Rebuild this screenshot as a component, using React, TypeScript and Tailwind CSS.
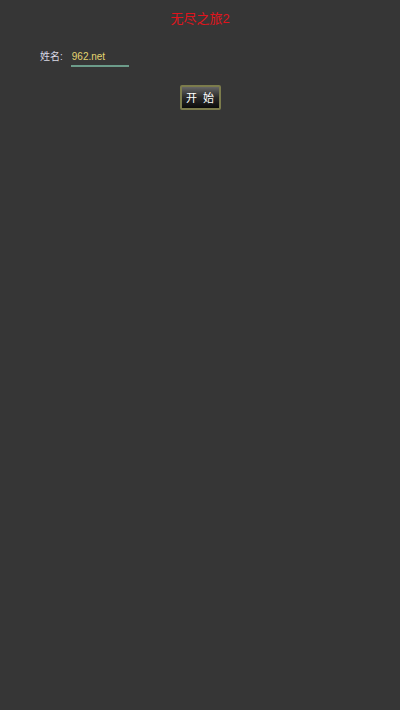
import React from "react";

const App = () => {
  return (
    <div
      className="w-[400px] h-[710px] bg-[#363636] flex flex-col"
      style={{ fontFamily: '"Liberation Sans", "Noto Sans CJK SC", sans-serif' }}
    >
      {/* Title */}
      <div className="pt-[11px] h-[28px] text-center text-[13px] leading-[16px] text-[#e0141c]">
        无尽之旅2
      </div>

      {/* Name row */}
      <div className="flex items-start mt-[23px] pl-[40px] text-[10px] leading-[12px]">
        <span className="text-[#d8d8e4]">姓名:</span>
        <div className="ml-[8px] w-[58px] border-b-2 border-[#6c9c8a] pb-[2px] text-[#e4d470] pl-[1px]">
          962.net
        </div>
      </div>

      {/* Start button */}
      <div className="flex justify-center mt-[18px]">
        <button className="w-[41px] h-[25px] border-2 border-[#7c7c4c] rounded-[2px] bg-gradient-to-b from-[#666666] via-[#2a2a2a] to-[#0c0c0c] text-[11px] leading-[12px] text-white whitespace-nowrap">
          开&nbsp;&nbsp;始
        </button>
      </div>
    </div>
  );
};

export default App;
